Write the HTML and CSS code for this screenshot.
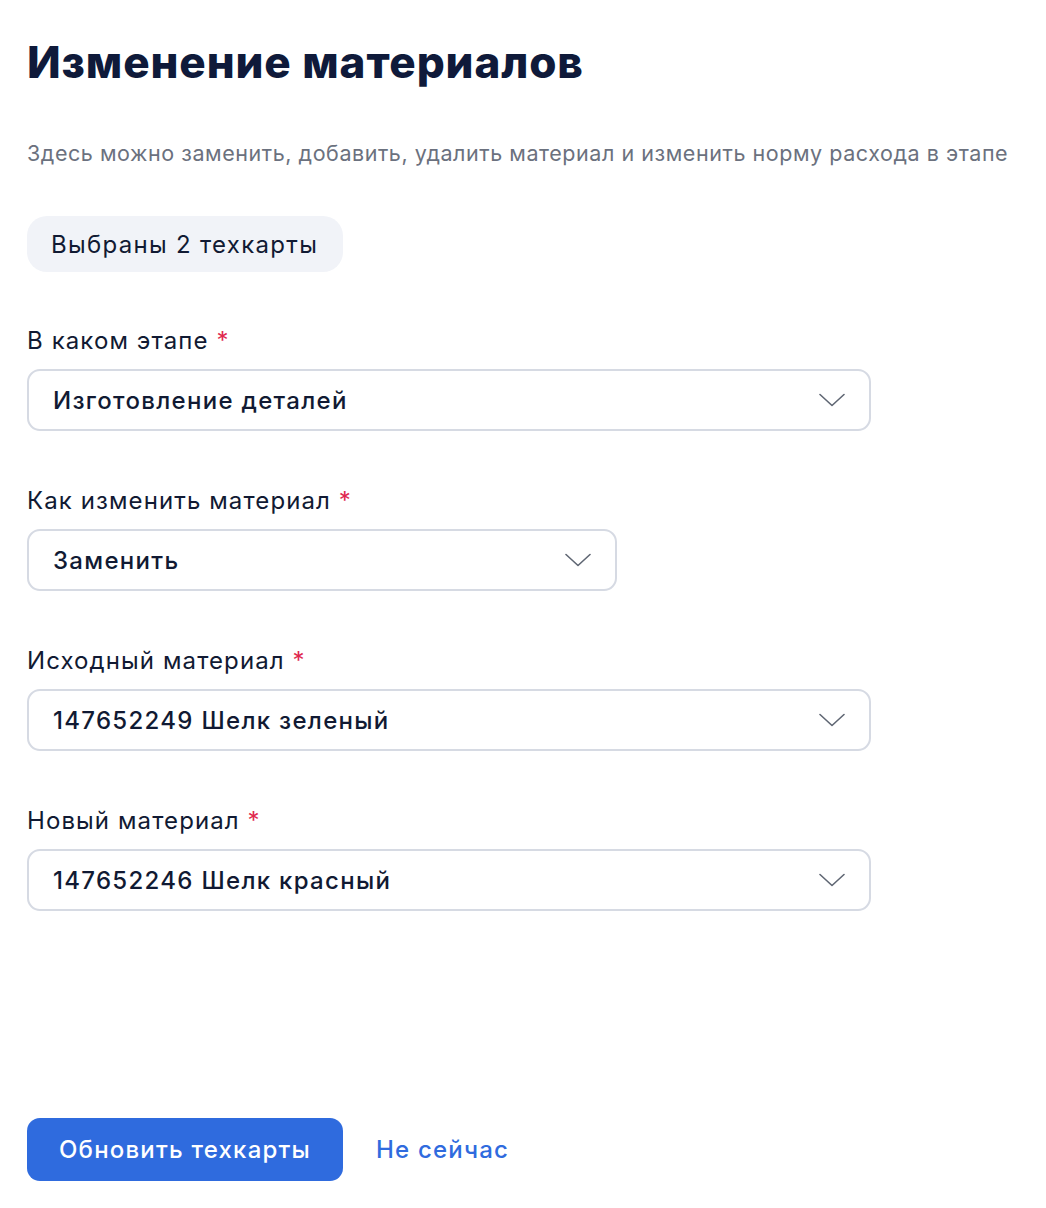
FILE: index.html
```html
<!DOCTYPE html>
<html lang="ru">
<head>
<meta charset="utf-8">
<title>Изменение материалов</title>
<link rel="stylesheet" href="styles.css">
</head>
<body>
<main class="page">
  <h1 class="title">Изменение материалов</h1>
  <p class="subtitle">Здесь можно заменить, добавить, удалить материал и изменить норму расхода в этапе</p>
  <div class="chip">Выбраны 2 техкарты</div>

  <div class="fields">
    <div class="field">
      <div class="label">В каком этапе <span class="req">*</span></div>
      <div class="select wide">
        <span class="value">Изготовление деталей</span>
        <svg class="chev" width="26" height="14" viewBox="0 0 26 14"><path d="M1 1.5 L13 12.5 L25 1.5" fill="none" stroke="#5f6673" stroke-width="1.6" stroke-linecap="round" stroke-linejoin="round"/></svg>
      </div>
    </div>
    <div class="field">
      <div class="label">Как изменить материал <span class="req">*</span></div>
      <div class="select narrow">
        <span class="value">Заменить</span>
        <svg class="chev" width="26" height="14" viewBox="0 0 26 14"><path d="M1 1.5 L13 12.5 L25 1.5" fill="none" stroke="#5f6673" stroke-width="1.6" stroke-linecap="round" stroke-linejoin="round"/></svg>
      </div>
    </div>
    <div class="field">
      <div class="label">Исходный материал <span class="req">*</span></div>
      <div class="select wide">
        <span class="value">147652249 Шелк зеленый</span>
        <svg class="chev" width="26" height="14" viewBox="0 0 26 14"><path d="M1 1.5 L13 12.5 L25 1.5" fill="none" stroke="#5f6673" stroke-width="1.6" stroke-linecap="round" stroke-linejoin="round"/></svg>
      </div>
    </div>
    <div class="field">
      <div class="label">Новый материал <span class="req">*</span></div>
      <div class="select wide">
        <span class="value">147652246 Шелк красный</span>
        <svg class="chev" width="26" height="14" viewBox="0 0 26 14"><path d="M1 1.5 L13 12.5 L25 1.5" fill="none" stroke="#5f6673" stroke-width="1.6" stroke-linecap="round" stroke-linejoin="round"/></svg>
      </div>
    </div>
  </div>

  <div class="actions">
    <button class="btn-primary" type="button">Обновить техкарты</button>
    <button class="btn-link" type="button">Не сейчас</button>
  </div>
</main>
</body>
</html>
```

FILE: styles.css
```css
* { box-sizing: border-box; }
html, body { margin: 0; padding: 0; background: #ffffff; }
body {
  font-family: Inter, "Noto Sans", sans-serif;
  color: #111a33;
}
.page {
  padding: 36px 27px 0 27px;
  display: flex;
  flex-direction: column;
  align-items: flex-start;
}
.title {
  margin: 0;
  font-size: 44px;
  line-height: 52px;
  font-weight: 800;
  color: #0f1a3a;
  letter-spacing: 0.9px;
}
.subtitle {
  margin: 51px 0 0 0;
  font-size: 21.5px;
  line-height: 28px;
  letter-spacing: 0.55px;
  color: #6b717e;
}
.chip {
  margin-top: 49px;
  height: 56px;
  width: 316px;
  padding: 0 24px;
  display: flex;
  align-items: center;
  border-radius: 20px;
  background: #f1f3f8;
  font-size: 24px;
  letter-spacing: 1.3px;
  color: #111a33;
}
.fields {
  margin-top: 54px;
  display: flex;
  flex-direction: column;
  gap: 55px;
  width: 100%;
}
.field {
  display: flex;
  flex-direction: column;
  gap: 13px;
}
.label {
  font-size: 24px;
  line-height: 30px;
  letter-spacing: 1.1px;
  color: #111a33;
}
.req { color: #e0284f; letter-spacing: 0; }
.select {
  height: 62px;
  border: 2px solid #d6dae3;
  border-radius: 13px;
  display: flex;
  align-items: center;
  justify-content: space-between;
  padding: 0 24px 0 24px;
  background: #fff;
}
.select.wide { width: 844px; }
.select.narrow { width: 590px; }
.value {
  font-size: 24px;
  font-weight: 500;
  letter-spacing: 1.3px;
  color: #111a33;
}
.chev { display: block; }
.actions {
  margin-top: 207px;
  display: flex;
  align-items: center;
  gap: 33px;
}
.btn-primary {
  height: 63px;
  width: 316px;
  border: none;
  border-radius: 13px;
  background: #2f6bde;
  color: #fff;
  font-family: Inter, "Noto Sans", sans-serif;
  font-size: 24px;
  font-weight: 500;
  letter-spacing: 1.2px;
  padding: 0;
}
.btn-link {
  border: none;
  background: none;
  padding: 0;
  color: #2f6bde;
  font-family: Inter, "Noto Sans", sans-serif;
  font-size: 24px;
  font-weight: 500;
  letter-spacing: 1.2px;
}
```
